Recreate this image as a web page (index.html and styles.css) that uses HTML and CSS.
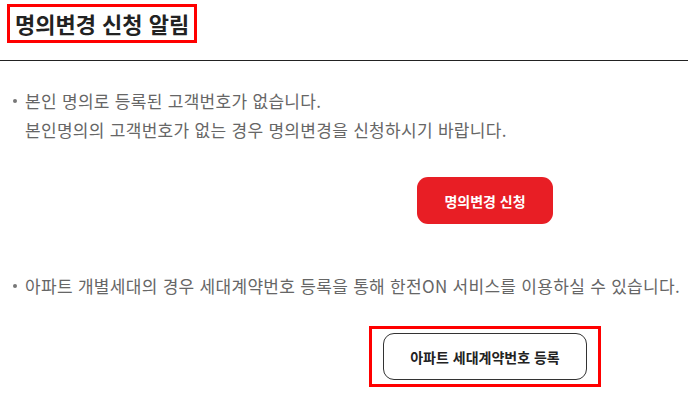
FILE: index.html
```html
<!DOCTYPE html>
<html lang="ko">
<head>
    <meta charset="UTF-8">
    <meta name="viewport" content="width=device-width, initial-scale=1.0">
    <title>명의변경 신청 알림</title>
    <link rel="stylesheet" href="styles.css">
</head>
<body>
    <header class="page-head">
        <h1 class="page-title"><span class="mark">명의변경 신청 알림</span></h1>
    </header>

    <section class="notice">
        <ul class="notice-list">
            <li>본인 명의로 등록된 고객번호가 없습니다.<br>본인명의의 고객번호가 없는 경우 명의변경을 신청하시기 바랍니다.</li>
        </ul>
        <div class="btn-row first">
            <button class="btn btn-red">명의변경 신청</button>
        </div>

        <ul class="notice-list second">
            <li>아파트 개별세대의 경우 세대계약번호 등록을 통해 한전ON 서비스를 이용하실 수 있습니다.</li>
        </ul>
        <div class="btn-row last">
            <span class="mark-box">
                <button class="btn btn-line">아파트 세대계약번호 등록</button>
            </span>
        </div>
    </section>
</body>
</html>
```

FILE: styles.css
```css
body {
    margin: 0;
    padding: 0;
    background: #fff;
    font-family: "Noto Sans CJK KR", "Noto Sans", sans-serif;
    color: #222;
}

.page-head {
    padding: 4px 0 17px 7px;
    border-bottom: 1px solid #222;
}

.page-title {
    margin: 0;
    font-size: 22px;
    font-weight: 700;
    line-height: 31px;
    color: #222;
}

.mark {
    display: inline-block;
    border: 3px solid #ff0000;
    padding: 1px 5px;
}

.notice {
    padding-top: 25px;
}

.notice-list {
    list-style: none;
    margin: 0;
    padding: 0;
}

.notice-list li {
    position: relative;
    padding-left: 25px;
    font-size: 17px;
    line-height: 29px;
    letter-spacing: 0.3px;
    color: #666;
}

.notice-list li::before {
    content: '';
    position: absolute;
    left: 13px;
    top: 13px;
    width: 4px;
    height: 4px;
    border-radius: 50%;
    background: #777;
}

.notice-list.second {
    margin-top: 47px;
}

.btn-row {
    display: flex;
    justify-content: center;
    padding-left: 282px;
}

.btn-row.first {
    margin-top: 33px;
}

.btn-row.last {
    margin-top: 26px;
}

.btn {
    font-family: inherit;
    font-size: 14px;
    font-weight: 700;
    height: 47px;
    border-radius: 11px;
    cursor: pointer;
}

.btn-red {
    width: 136px;
    border: none;
    background-color: #e81e25;
    color: #fff;
}

.btn-line {
    width: 204px;
    border: 1px solid #333;
    background-color: #fff;
    color: #222;
}

.mark-box {
    display: inline-flex;
    border: 3px solid #ff0000;
    padding: 4px 11px;
}
```
